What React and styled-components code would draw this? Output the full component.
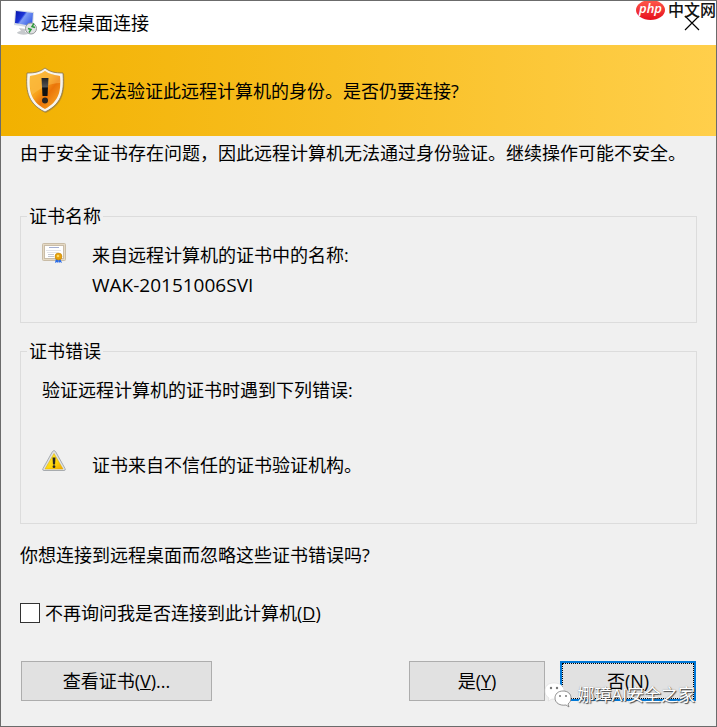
import React, { useState } from 'react';
import styled, { createGlobalStyle } from 'styled-components';

const GlobalStyle = createGlobalStyle`
	* {
		box-sizing: border-box;
	}
	body {
		margin: 0;
		background: #f0f0f0;
		color: #000;
		font-family: 'Open Sans', 'Noto Sans CJK SC', sans-serif;
		font-size: 18px;
		line-height: 24px;
	}
`;

const Dialog = styled.main`
	position: relative;
	display: flex;
	flex-direction: column;
	min-height: 100vh;
	overflow: hidden;
	border: 1px solid #6b6b6b;
	background: #f0f0f0;
`;

const TitleBar = styled.header`
	display: flex;
	align-items: center;
	gap: 4px;
	height: 44px;
	padding: 0 12px;
	background: #fff;
`;

const Title = styled.h1`
	flex: 1;
	margin: 0;
	font-size: 18px;
	font-weight: 400;
`;

const CloseButton = styled.button`
	display: flex;
	padding: 4px;
	border: 0;
	background: none;
`;

const Banner = styled.div`
	display: flex;
	align-items: center;
	gap: 26px;
	height: 91px;
	padding: 0 24px;
	background: linear-gradient(90deg, #f2b100, #ffcf4b);
`;

const Text = styled.p`
	margin: 0;
`;

const MachineName = styled.p`
	margin: 0;
	font-size: 19px;
`;

const Body = styled.div`
	display: flex;
	flex-direction: column;
	padding: 5px 19px 24px;
`;

const Group = styled.fieldset`
	min-width: 0;
	margin: ${(props) => (props.$first ? '39px' : '16px')} 0 0;
	padding: ${(props) => (props.$first ? '12px 21px 22px' : '15px 21px 46px')};
	border: 1px solid #dcdcdc;

	legend {
		margin-left: -15px;
		padding: 0 2px;
	}
`;

const IconRow = styled.div`
	display: grid;
	grid-template-columns: 24px 1fr;
	gap: 26px;
	margin-top: ${(props) => (props.$spaced ? '51px' : '0')};
	line-height: ${(props) => (props.$spaced ? '24px' : '30px')};

	svg {
		margin-top: ${(props) => (props.$spaced ? '-3px' : '3px')};
	}
`;

const Question = styled.p`
	margin: 19px 0 34px;
`;

const CheckLabel = styled.label`
	display: flex;
	align-items: center;
	gap: 5px;
`;

const CheckBox = styled.input`
	appearance: none;
	width: 20px;
	height: 20px;
	margin: 0;
	border: 1px solid #333;
	background: #fff;

	&:checked {
		background: #0078d7;
		box-shadow: inset 0 0 0 3px #fff;
	}
`;

const Footer = styled.footer`
	display: flex;
	gap: 15px;
	margin-top: 36px;
	padding: 0 1px;
`;

const Button = styled.button`
	width: ${(props) => (props.$wide ? '191px' : '136px')};
	height: 40px;
	margin-right: ${(props) => (props.$wide ? 'auto' : '0')};
	padding: 0;
	border: ${(props) => (props.$primary ? '2px solid #0078d7' : '1px solid #adadad')};
	outline: ${(props) => (props.$primary ? '1px dotted #000' : 'none')};
	outline-offset: -3px;
	background: #e1e1e1;
	color: #000;
	font: inherit;
`;

const SiteMark = styled.div`
	position: absolute;
	top: -2px;
	right: 0;
	display: flex;
	align-items: center;
	gap: 3px;
	pointer-events: none;
	font-size: 16px;
	line-height: 22px;
	font-weight: 500;
	color: #111;
`;

const PhpBadge = styled.span`
	width: 29px;
	height: 20px;
	border-radius: 50%;
	background: linear-gradient(#ff5a4c, #e60f1c);
	color: #fff;
	font: italic 600 13px/17px 'Open Sans', sans-serif;
	text-align: center;
`;

const AuthorMark = styled.div`
	position: absolute;
	right: 21px;
	bottom: 18px;
	display: flex;
	align-items: center;
	gap: 6px;
	pointer-events: none;
	font-size: 17px;
	color: #fff;
	text-shadow: 1px 1px 1px #444, 0 0 1px #888;
`;

function ComputerIcon() {
	return (
		<svg width='24' height='26' viewBox='0 0 24 26' aria-hidden='true'>
			<defs>
				<linearGradient id='screen' x1='0' y1='0' x2='1' y2='0.6'>
					<stop offset='0' stopColor='#0714a8' />
					<stop offset='0.45' stopColor='#1c35d8' />
					<stop offset='0.55' stopColor='#7d9cf5' />
					<stop offset='1' stopColor='#3c62e6' />
				</linearGradient>
			</defs>
			<path d='M6 18l7 1-1 3c2 0 3 1 3 2-3 1-8 1-11-1 0-1 2-2 4-2z' fill='#c6c9cc' />
			<path d='M2 0l19 2-1 16L1 15z' fill='#d5dbe5' />
			<path d='M3 1l17 2-1 13L2 13z' fill='url(#screen)' />
			<circle cx='18' cy='18.500' r='5.500' fill='#dfe1e2' stroke='#96999b' />
			<path d='M15 18.500l3 1-2 3M22 17.500l-3-1 2-3' fill='none' stroke='#2d9b3b' strokeWidth='1.500' />
		</svg>
	);
}

function ShieldIcon() {
	return (
		<svg width='40' height='48' viewBox='0 0 40 48' aria-hidden='true'>
			<defs>
				<linearGradient id='shield' x1='0' y1='0' x2='1' y2='1'>
					<stop offset='0' stopColor='#f9b01f' />
					<stop offset='0.4' stopColor='#f8a41c' />
					<stop offset='0.6' stopColor='#ea7409' />
					<stop offset='1' stopColor='#ffb52b' />
				</linearGradient>
				<linearGradient id='mark' x1='0' y1='0' x2='0' y2='1'>
					<stop offset='0' stopColor='#222' />
					<stop offset='0.5' stopColor='#555' />
					<stop offset='0.55' stopColor='#111' />
				</linearGradient>
			</defs>
			<path
				d='M20 1c5 4 10 5 18 5 1 15 1 30-18 39C1 36 1 21 2 6c8 0 13-1 18-5z'
				fill='#9b7a30'
				opacity='0.5'
				transform='translate(1 1)'
			/>
			<path
				d='M20 1c5 4 10 5 18 5 1 15 1 30-18 39C1 36 1 21 2 6c8 0 13-1 18-5z'
				fill='#f7f4ec'
				stroke='#85724c'
				strokeWidth='0.800'
			/>
			<path d='M20 4c4 3 9 4 15 5 1 14 0 25-15 33C5 34 4 23 5 9c6-1 11-2 15-5z' fill='url(#shield)' />
			<path d='M20 4c4 3 9 4 15 5v7c-10 0-20 5-28 12-2-6-3-12-2-19 6-1 11-2 15-5z' fill='#ffce65' opacity='0.4' />
			<path d='M16.500 11h7l-1 18h-5z' fill='url(#mark)' />
			<circle cx='20' cy='33.500' r='3' fill='#292522' />
		</svg>
	);
}

function CertificateIcon() {
	return (
		<svg width='24' height='20' viewBox='0 0 24 20' aria-hidden='true'>
			<rect x='0.500' y='0.500' width='23' height='17' rx='1' fill='#e5d9c4' stroke='#c9bca6' />
			<rect x='2.500' y='2.500' width='19' height='13' fill='#fff' stroke='#c9bca8' />
			<path d='M7 4.500h10' stroke='#a3add0' />
			<path d='M4 7.500h15M5 9.500h11' stroke='#e3e4ea' />
			<path d='M6 11.500h6M6 13.500h6' stroke='#c3c6d2' />
			<path d='M14 15l-1 5 2-1 1 1 1-4zM18 15l2 5-2-1-1 1-1-4z' fill='#286be8' />
			<circle cx='16.500' cy='13.500' r='3.500' fill='#e6a10d' stroke='#b87a09' strokeWidth='0.500' />
			<circle cx='16' cy='13' r='1.300' fill='#ffda63' />
		</svg>
	);
}

function WarningIcon() {
	return (
		<svg width='24' height='22' viewBox='0 0 24 22' aria-hidden='true'>
			<defs>
				<linearGradient id='warn' x1='0' y1='0' x2='1' y2='1'>
					<stop offset='0' stopColor='#fff04a' />
					<stop offset='0.6' stopColor='#ffd60a' />
					<stop offset='1' stopColor='#efa500' />
				</linearGradient>
			</defs>
			<path
				d='M10.500 1.500q1.500-2 3 0l9.500 17q1 2-1 2H2q-2 0-1-2z'
				fill='#dfe2e4'
				stroke='#a7abaf'
			/>
			<path d='M12 3.500L21 19H3z' fill='url(#warn)' stroke='#dda800' strokeWidth='0.500' />
			<path d='M10.500 7.500h3l-0.500 7h-2z' fill='#262626' />
			<circle cx='12' cy='16.700' r='1.400' fill='#262626' />
		</svg>
	);
}

function CloseIcon() {
	return (
		<svg width='16' height='16' viewBox='0 0 16 16' aria-hidden='true'>
			<path d='M1 1l14 14M15 1L1 15' stroke='#000' strokeWidth='1.200' />
		</svg>
	);
}

function ChatIcon() {
	return (
		<svg width='28' height='26' viewBox='0 0 28 26' aria-hidden='true'>
			<path
				d='M10 1C4 1 1 4 1 9c0 3 1 5 4 7l-1 3 4-2c7 1 12-3 12-8s-4-8-10-8z'
				fill='#fff'
				stroke='#d4d4d4'
				strokeWidth='0.500'
			/>
			<path
				d='M19 9c-5 0-8 3-8 7 0 5 5 8 11 7l3 2-1-3c2-2 3-3 3-6 0-4-3-7-8-7z'
				fill='#fff'
				stroke='#777'
				strokeWidth='0.800'
			/>
			<g fill='#777'>
				<circle cx='7' cy='6' r='1.200' />
				<circle cx='13' cy='6' r='1.200' />
				<circle cx='16' cy='14' r='1' />
				<circle cx='22' cy='14' r='1' />
			</g>
		</svg>
	);
}

function App() {
	const [skip, setSkip] = useState(false);

	return (
		<Dialog>
			<GlobalStyle />
			<TitleBar>
				<ComputerIcon />
				<Title>远程桌面连接</Title>
				<CloseButton type='button' aria-label='关闭'>
					<CloseIcon />
				</CloseButton>
			</TitleBar>
			<Banner>
				<ShieldIcon />
				<Text>无法验证此远程计算机的身份。是否仍要连接?</Text>
			</Banner>
			<Body>
				<Text>由于安全证书存在问题，因此远程计算机无法通过身份验证。继续操作可能不安全。</Text>
				<Group $first>
					<legend>证书名称</legend>
					<IconRow>
						<CertificateIcon />
						<div>
							<Text>来自远程计算机的证书中的名称:</Text>
							<MachineName>WAK-20151006SVI</MachineName>
						</div>
					</IconRow>
				</Group>
				<Group>
					<legend>证书错误</legend>
					<Text>验证远程计算机的证书时遇到下列错误:</Text>
					<IconRow $spaced>
						<WarningIcon />
						<Text>证书来自不信任的证书验证机构。</Text>
					</IconRow>
				</Group>
				<Question>你想连接到远程桌面而忽略这些证书错误吗?</Question>
				<CheckLabel>
					<CheckBox type='checkbox' checked={skip} onChange={(e) => setSkip(e.target.checked)} />
					<span>
						不再询问我是否连接到此计算机(<u>D</u>)
					</span>
				</CheckLabel>
				<Footer>
					<Button type='button' $wide>
						查看证书(<u>V</u>)...
					</Button>
					<Button type='button'>
						是(<u>Y</u>)
					</Button>
					<Button type='button' $primary>
						否(<u>N</u>)
					</Button>
				</Footer>
			</Body>
			<SiteMark>
				<PhpBadge>php</PhpBadge>
				<span>中文网</span>
			</SiteMark>
			<AuthorMark>
				<ChatIcon />
				<span>娜璋AI安全之家</span>
			</AuthorMark>
		</Dialog>
	);
}

export default App;
